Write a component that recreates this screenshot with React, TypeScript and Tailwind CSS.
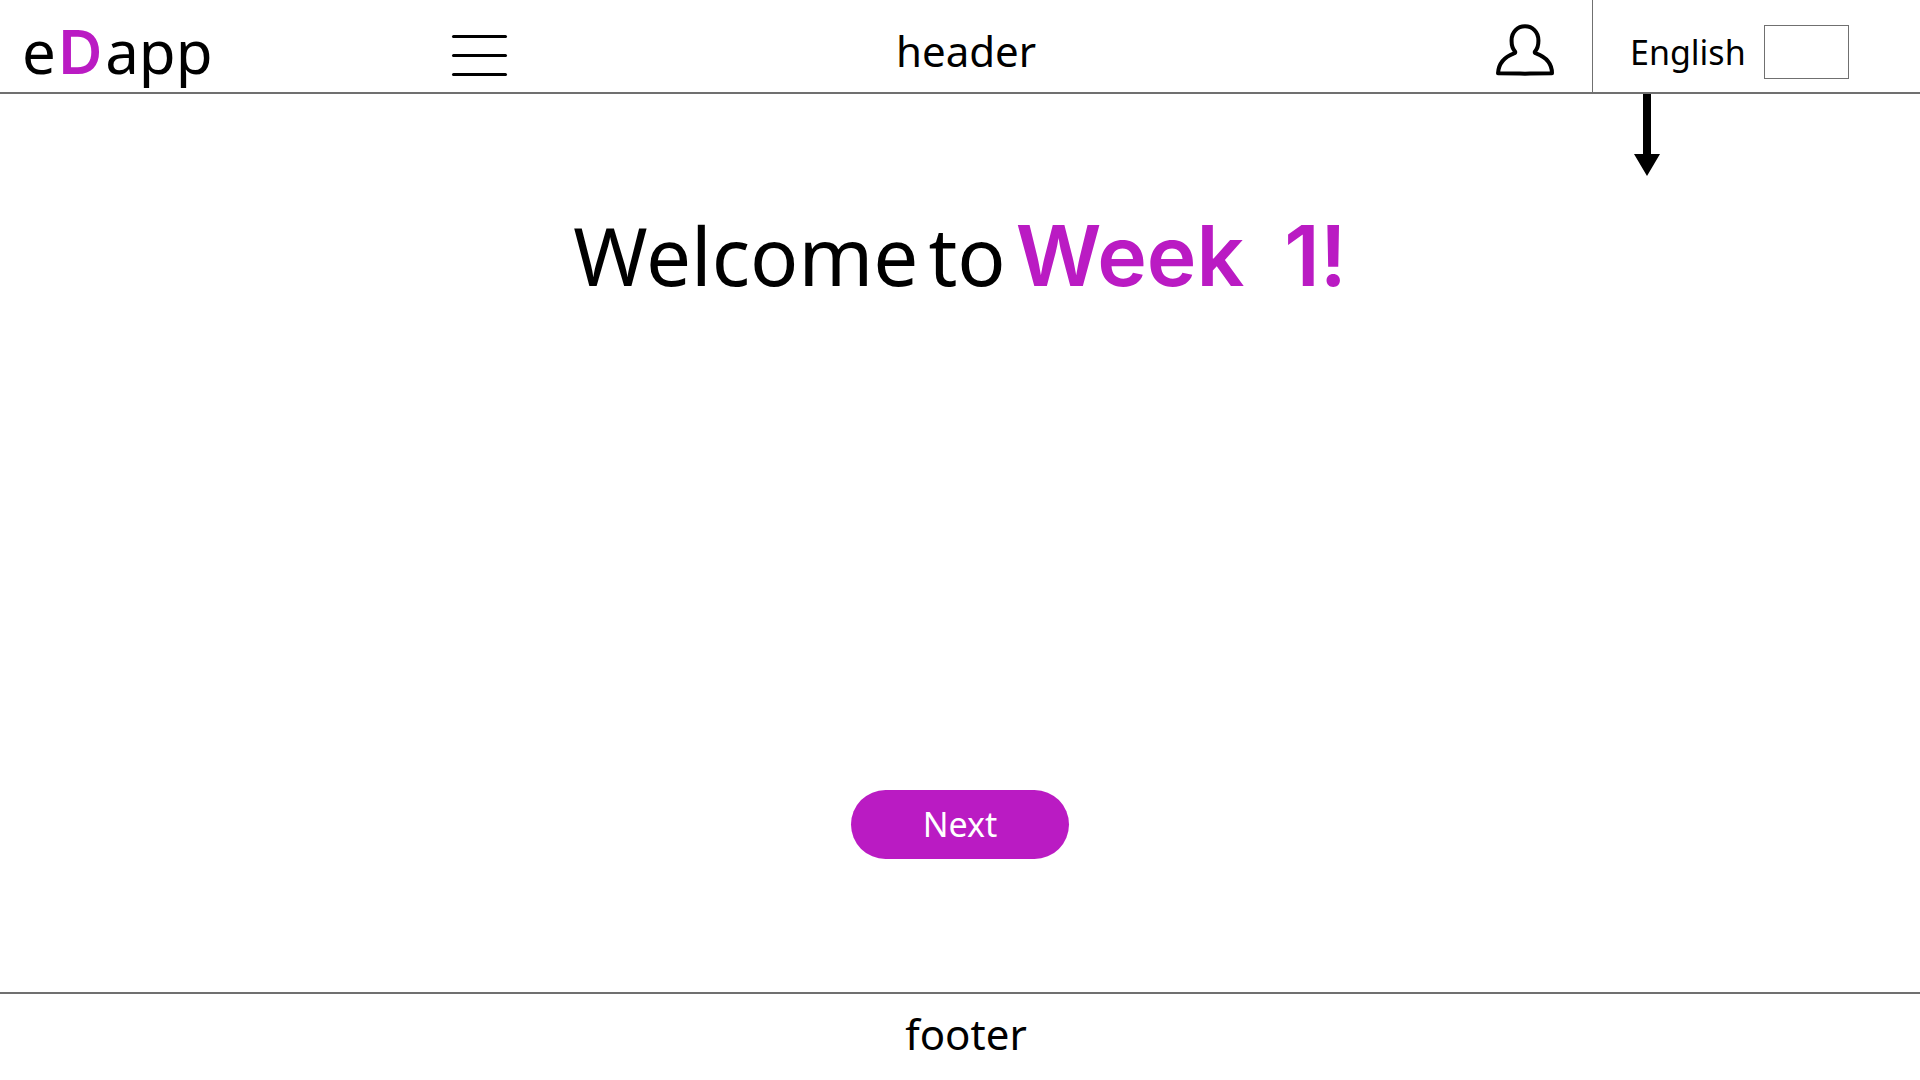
function Header() {
  return (
    <header className="grid h-[94px] grid-cols-[452fr_444fr_600fr_96fr_328fr] border-b-2 border-[#707070]">
      <a href="#" className="flex items-center pt-2.5 pl-[22px] text-[60px] leading-none">
        <span>
          e<span className="mx-[3px] font-['Inter'] font-semibold text-[#ba1bc3]">D</span>app
        </span>
      </a>
      <div className="flex items-center pt-[18px]">
        <button type="button" aria-label="Menu" className="flex flex-col gap-4">
          <span className="h-[3px] w-[55px] rounded-full bg-black" />
          <span className="h-[3px] w-[55px] rounded-full bg-black" />
          <span className="h-[3px] w-[55px] rounded-full bg-black" />
        </button>
      </div>
      <p className="flex items-center pt-2.5 text-[42px] leading-none">header</p>
      <div className="flex items-center pt-2">
        <button type="button" aria-label="Account">
          <svg width="58" height="52" viewBox="0 0 58 52" fill="none" stroke="black" strokeWidth="4" strokeLinejoin="round">
            <path d="M19 27.5C16 24 15.5 19 15.6 16C15.8 8 21.5 2.3 29 2.3C36.5 2.3 42.2 8 42.4 16C42.5 19 42 24 39 27.5C38.5 28.5 38.8 29 40 29.3C50 33 56 40 56 49.3C47 49.3 38 49.3 29 49.7C20 49.3 11 49.3 2 49.3C2.5 40 8 33 18 29.3C19.2 29 19.5 28.5 19 27.5Z" />
          </svg>
        </button>
      </div>
      <div className="relative flex items-center gap-[18px] border-l border-[#707070] pt-3 pl-[37px]">
        <label htmlFor="language" className="text-[34px] leading-none">English</label>
        <input id="language" type="text" className="h-[54px] w-[85px] border border-[#707070] bg-white px-2 text-2xl" />
        <svg className="absolute top-full left-[41px] mt-0.5" width="26" height="82" viewBox="0 0 26 82" aria-hidden="true">
          <path d="M9 0H17V60H26L13 82L0 60H9Z" />
        </svg>
      </div>
    </header>
  );
}

export default function App() {
  return (
    <div className="flex min-h-screen flex-col bg-white font-['Noto_Sans',sans-serif] text-black">
      <Header />
      <main className="flex flex-1 flex-col items-center justify-between pt-[113px] pb-[133px]">
        <h1 className="flex items-baseline gap-2.5 text-[80px] leading-[96px]">
          <span>Welcome</span>
          <span>to</span>
          <span className="flex gap-10 font-['Inter'] text-[84px] font-semibold text-[#ba1bc3]">
            <span>Week</span>
            <span>1!</span>
          </span>
        </h1>
        <button type="button" className="h-[69px] w-[218px] rounded-full bg-[#ba1bc3] pb-0.5 text-[34px] leading-none text-white">
          Next
        </button>
      </main>
      <footer className="flex h-[88px] items-center justify-center border-t-2 border-[#707070] pb-1.5 pl-3 text-[42px] leading-none">
        footer
      </footer>
    </div>
  );
}
